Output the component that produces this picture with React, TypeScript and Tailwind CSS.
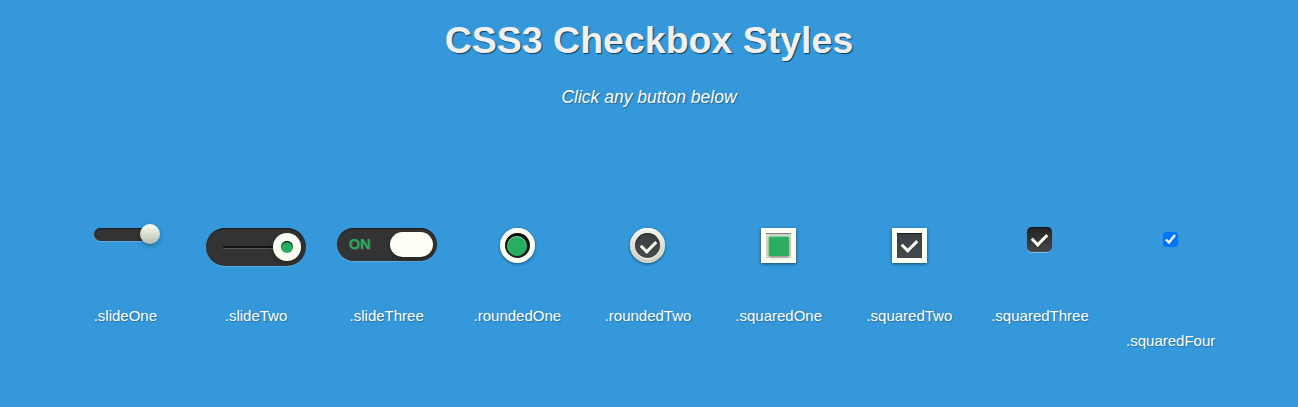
import React from 'react';

// Shared bits for the knobs and the tick marks
const knobBg = 'bg-[linear-gradient(to_bottom,#fcfff4_0%,#dfe5d7_40%,#b3bead_100%)]';
const trackShadow = 'shadow-[inset_0_1px_1px_rgba(0,0,0,0.5),0_1px_0_rgba(255,255,255,0.2)]';
const frameShadow = 'shadow-[inset_0_1px_1px_white,0_1px_3px_rgba(0,0,0,0.5)]';
const wellShadow = 'shadow-[inset_0_1px_1px_rgba(0,0,0,0.5),0_1px_0_white]';

const Tick: React.FC<{ className?: string }> = ({ className = '' }) => (
    <span className={`w-[15px] h-[10px] border-l-[3.75px] border-b-[3.75px] border-[#fcfff4] -rotate-45 ${className}`} />
);

const SlideOne = () => (
    <div className={`relative w-[62.5px] h-[12.5px] rounded-full bg-[#333] ${trackShadow}`}>
        <span className={`absolute top-[-3.75px] left-[46.25px] w-5 h-5 rounded-full ${knobBg} shadow-[0_2px_5px_0_rgba(0,0,0,0.3)]`} />
    </div>
);

const SlideTwo = () => (
    <div className={`relative flex items-center justify-end pr-[5px] w-[100px] h-[37.5px] rounded-full bg-[#333] ${trackShadow}`}>
        <span className="absolute left-[17.5px] top-[17.5px] w-[65px] h-[2.5px] rounded bg-[#111] shadow-[0_1px_0_rgba(255,255,255,0.2)]" />
        <span className="relative flex items-center justify-center w-[27.5px] h-[27.5px] rounded-full bg-[#fcfff4] shadow-[0_2px_5px_0_rgba(0,0,0,0.3)]">
            <span className="w-[12.5px] h-[12.5px] rounded-full bg-[#27ae60] shadow-[inset_0_1px_1px_rgba(0,0,0,1),0_1px_0_rgba(255,255,255,0.9)]" />
        </span>
    </div>
);

const SlideThree = () => (
    <div className={`flex items-center justify-between pl-[12px] pr-[3.75px] w-[100px] h-[32.5px] rounded-full bg-[#333] ${trackShadow}`}>
        <span className="text-[14.5px] leading-none font-bold text-[#27ae60] [text-shadow:1px_1px_0_rgba(255,255,255,0.15)]">ON</span>
        <span className="w-[42.5px] h-[25px] rounded-full bg-[#fcfff4] shadow-[0_2px_5px_0_rgba(0,0,0,0.3)]" />
    </div>
);

const RoundedOne = () => (
    <div className={`flex items-center justify-center w-[35px] h-[35px] rounded-full bg-[#fcfff4] ${frameShadow}`}>
        <span className={`flex items-center justify-center w-[25px] h-[25px] rounded-full bg-[linear-gradient(to_bottom,#111_0%,#222_100%)] ${wellShadow}`}>
            <span className="w-5 h-5 rounded-full bg-[#27ae60] shadow-[inset_0_1px_1px_rgba(255,255,255,0.4)]" />
        </span>
    </div>
);

const RoundedTwo = () => (
    <div className={`flex items-center justify-center w-[35px] h-[35px] rounded-full bg-[linear-gradient(to_bottom,#f2f4e9_0%,#dfe2d3_50%,#cdd1c0_100%)] ${frameShadow}`}>
        <span className={`flex items-center justify-center w-[25px] h-[25px] rounded-full bg-[linear-gradient(to_bottom,#3d4045_0%,#45484d_100%)] ${wellShadow}`}>
            <Tick className="-mt-[2px] ml-[1px]" />
        </span>
    </div>
);

const SquaredOne = () => (
    <div className={`flex items-center justify-center w-[35px] h-[35px] bg-[#fcfff4] ${frameShadow}`}>
        <span className={`flex items-center justify-center w-[25px] h-[25px] bg-[#e4e6db] ${wellShadow}`}>
            <span className="w-5 h-5 bg-[#27ae60] shadow-[inset_0_1px_1px_rgba(255,255,255,0.5),0_1px_3px_rgba(0,0,0,0.5)]" />
        </span>
    </div>
);

const SquaredTwo = () => (
    <div className={`flex items-center justify-center w-[35px] h-[35px] bg-[#fcfff4] ${frameShadow}`}>
        <span className={`flex items-center justify-center w-[25px] h-[25px] bg-[linear-gradient(to_bottom,#3d4045_0%,#45484d_100%)] ${wellShadow}`}>
            <Tick className="-mt-[4px]" />
        </span>
    </div>
);

const SquaredThree = () => (
    <div className="flex items-center justify-center -mt-px w-[25px] h-[25px] rounded-[5px] bg-[linear-gradient(to_bottom,#222_0%,#45484d_100%)] shadow-[inset_0_1px_1px_rgba(0,0,0,0.5),0_1px_0_rgba(255,255,255,0.4)]">
        <Tick className="-mt-[4px]" />
    </div>
);

const SquaredFour = () => (
    <input type="checkbox" checked readOnly className="mt-[4px] w-[15px] h-[15px]" />
);

const items: { name: string; control: React.ReactElement }[] = [
    { name: '.slideOne', control: <SlideOne /> },
    { name: '.slideTwo', control: <SlideTwo /> },
    { name: '.slideThree', control: <SlideThree /> },
    { name: '.roundedOne', control: <RoundedOne /> },
    { name: '.roundedTwo', control: <RoundedTwo /> },
    { name: '.squaredOne', control: <SquaredOne /> },
    { name: '.squaredTwo', control: <SquaredTwo /> },
    { name: '.squaredThree', control: <SquaredThree /> },
    { name: '.squaredFour', control: <SquaredFour /> },
];

const App: React.FC = () => {
    return (
        <div className="min-h-[407px] bg-[#3498db] pt-[19px] text-white font-['Liberation_Sans',Arial,sans-serif]">
            <h1 className="text-center text-[37.5px] leading-[42px] font-bold text-[#f0f0f0] [text-shadow:1px_1px_1px_rgba(0,0,0,0.6)]">
                CSS3 Checkbox Styles
            </h1>
            <p className="mt-[26px] text-center text-[17.5px] leading-[20px] italic [text-shadow:1px_1px_1px_rgba(0,0,0,0.35)]">
                Click any button below
            </p>

            <div className="mt-[121px] mx-auto w-[1176px] grid grid-cols-9 -translate-x-px">
                {items.map((item) => (
                    <div key={item.name} className="flex flex-col items-center">
                        <div className="h-[79px] flex justify-center items-start">{item.control}</div>
                        <span
                            className={`text-[15px] leading-[17px] [text-shadow:1px_1px_1px_rgba(0,0,0,0.25)] ${
                                item.name === '.squaredFour' ? 'mt-[25px]' : ''
                            }`}
                        >
                            {item.name}
                        </span>
                    </div>
                ))}
            </div>
        </div>
    );
};

export default App;
